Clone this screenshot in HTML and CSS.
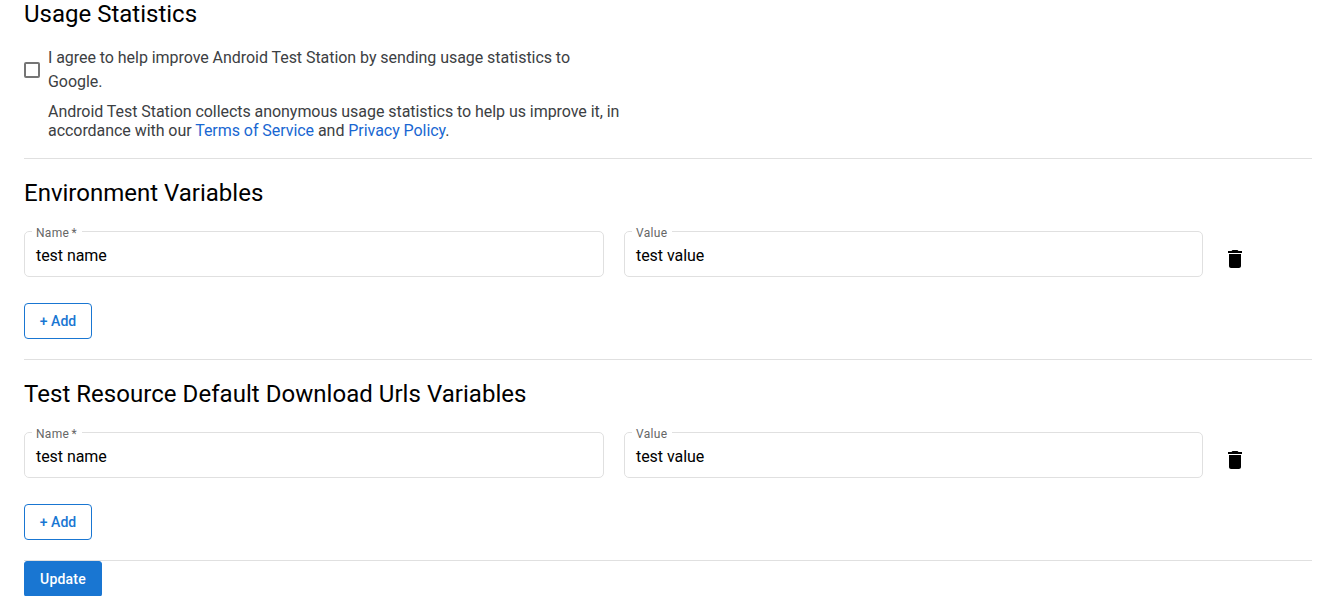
FILE: index.html
```html
<!DOCTYPE html>
<html lang="en">
<head>
<meta charset="utf-8">
<title>Settings</title>
<link rel="stylesheet" href="styles.css">
</head>
<body>
<main class="page">
  <section class="section usage">
    <h2>Usage Statistics</h2>
    <label class="agree"><span class="checkbox"></span><span class="agree-text">I agree to help improve Android Test Station by sending usage statistics to Google.</span></label>
    <p class="note">Android Test Station collects anonymous usage statistics to help us improve it, in accordance with our <a>Terms of Service</a> and <a>Privacy Policy</a>.</p>
  </section>
  <section class="section variables">
    <h2>Environment Variables</h2>
    <div class="row">
      <fieldset class="field"><legend>Name *</legend><span>test name</span></fieldset>
      <fieldset class="field"><legend>Value</legend><span>test value</span></fieldset>
      <svg class="trash" viewBox="0 0 24 24"><path d="M6 19c0 1.100.9 2 2 2h8c1.100 0 2-.9 2-2V7H6v12zM19 4h-3.500l-1-1h-5l-1 1H5v2h14V4z"/></svg>
    </div>
    <button class="button outlined">+ Add</button>
  </section>
  <section class="section variables">
    <h2 class="wide">Test Resource Default Download Urls Variables</h2>
    <div class="row">
      <fieldset class="field"><legend>Name *</legend><span>test name</span></fieldset>
      <fieldset class="field"><legend>Value</legend><span>test value</span></fieldset>
      <svg class="trash" viewBox="0 0 24 24"><path d="M6 19c0 1.100.9 2 2 2h8c1.100 0 2-.9 2-2V7H6v12zM19 4h-3.500l-1-1h-5l-1 1H5v2h14V4z"/></svg>
    </div>
    <button class="button outlined">+ Add</button>
  </section>
  <button class="button filled">Update</button>
</main>
</body>
</html>
```
FILE: styles.css
```css
* { box-sizing: border-box; }
body { margin: 0; height: 596px; overflow: hidden; background: #fff; color: #000; font: 16px/24px Roboto, sans-serif; letter-spacing: -.05px; }
.page { padding: 0 24px; }
.section { border-bottom: 1px solid #e0e0e0; }
h2 { margin: 0; font-size: 24px; font-weight: 400; line-height: 28px; letter-spacing: 0; }
h2.wide { letter-spacing: .04px; }
.usage { height: 159px; }
.agree { display: flex; align-items: center; gap: 8px; width: 600px; margin-top: 18px; color: #3c4043; }
.checkbox { flex: none; width: 16px; height: 16px; border: 2px solid #757575; border-radius: 2px; }
.agree-text { width: 550px; }
.note { width: 580px; margin: 8px 0 0 24px; line-height: 19px; color: #3c4043; }
.note a { color: #1967d2; }
.variables { height: 201px; padding-top: 20px; }
.row { display: flex; gap: 20px; margin-top: 16px; }
.field { width: 580px; height: 54px; min-width: 0; margin: 0; padding: 0 11px; border: 1px solid #e0e0e0; border-radius: 5px; }
.field + .field { width: 579px; }
.field legend { margin-left: -4px; padding: 4px 5px 0 4px; font-size: 12px; line-height: 12px; letter-spacing: .3px; word-spacing: -1px; color: #666; }
.field span { display: block; margin-top: 5px; }
.trash { width: 24px; height: 24px; margin: 24px 0 0; }
.button { display: block; height: 36px; padding: 0; border: 1px solid #1976d2; border-radius: 4px; font: 500 14px/34px Roboto, sans-serif; white-space: nowrap; }
.outlined { width: 68px; margin-top: 26px; background: #fff; color: #1976d2; }
.filled { width: 78px; border-radius: 3px; background: #1976d2; color: #fff; letter-spacing: .2px; }
```
